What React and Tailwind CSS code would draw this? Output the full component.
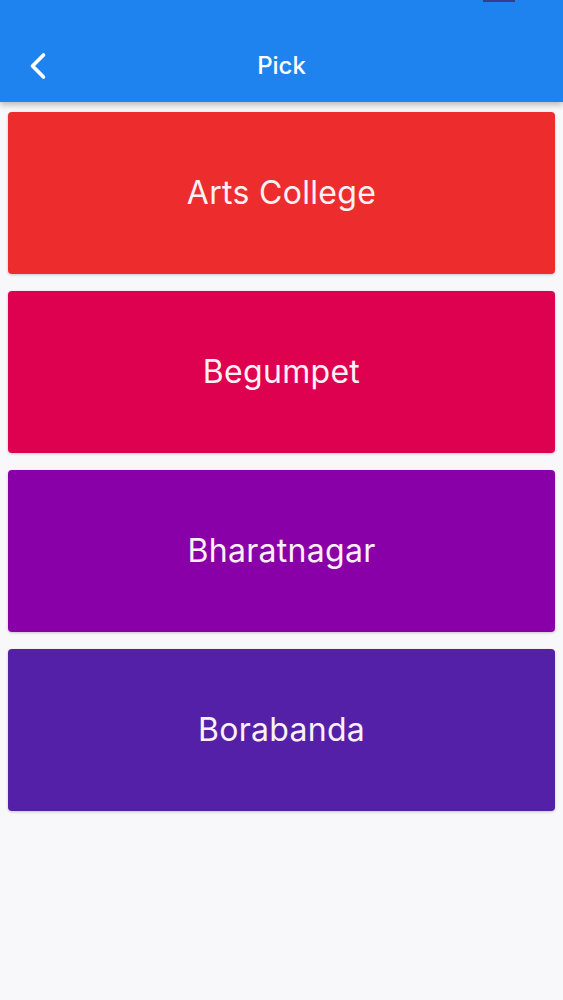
import { ChevronLeft } from "lucide-react";

const stops = [
  { name: "Arts College", color: "bg-[#ed2c2e]" },
  { name: "Begumpet", color: "bg-[#de0150]" },
  { name: "Bharatnagar", color: "bg-[#8a00a8]" },
  { name: "Borabanda", color: "bg-[#5420a8]" },
];

export default function App() {
  return (
    <div
      className="min-h-[1000px] w-full bg-[#f8f7fa]"
      style={{ fontFamily: "Inter, 'Noto Sans', sans-serif" }}
    >
      {/* HEADER */}
      <div className="relative h-[102px] bg-[#1f83ef] shadow-[0_3px_6px_rgba(0,0,0,0.25)]">
        <div className="absolute top-0 right-[48px] h-[2px] w-[32px] bg-[#3a3a8a]" />
        <div className="flex h-full items-center pt-[30px]">
          <button className="ml-[16px] flex h-[44px] w-[44px] items-center justify-center text-white">
            <ChevronLeft size={44} strokeWidth={2} />
          </button>
          <h1 className="flex-1 pr-[60px] text-center text-[24px] font-medium leading-[36px] text-white">
            Pick
          </h1>
        </div>
      </div>

      {/* LIST */}
      <div className="flex flex-col gap-[17px] px-2 pt-[10px]">
        {stops.map((s) => (
          <div
            key={s.name}
            className={`${s.color} flex h-[162px] items-center justify-center rounded-[4px] shadow-[0_1px_3px_rgba(0,0,0,0.2)]`}
          >
            <span className="text-[32px] leading-none tracking-[0.3px] text-[#fbf1f5]">
              {s.name}
            </span>
          </div>
        ))}
      </div>
    </div>
  );
}
